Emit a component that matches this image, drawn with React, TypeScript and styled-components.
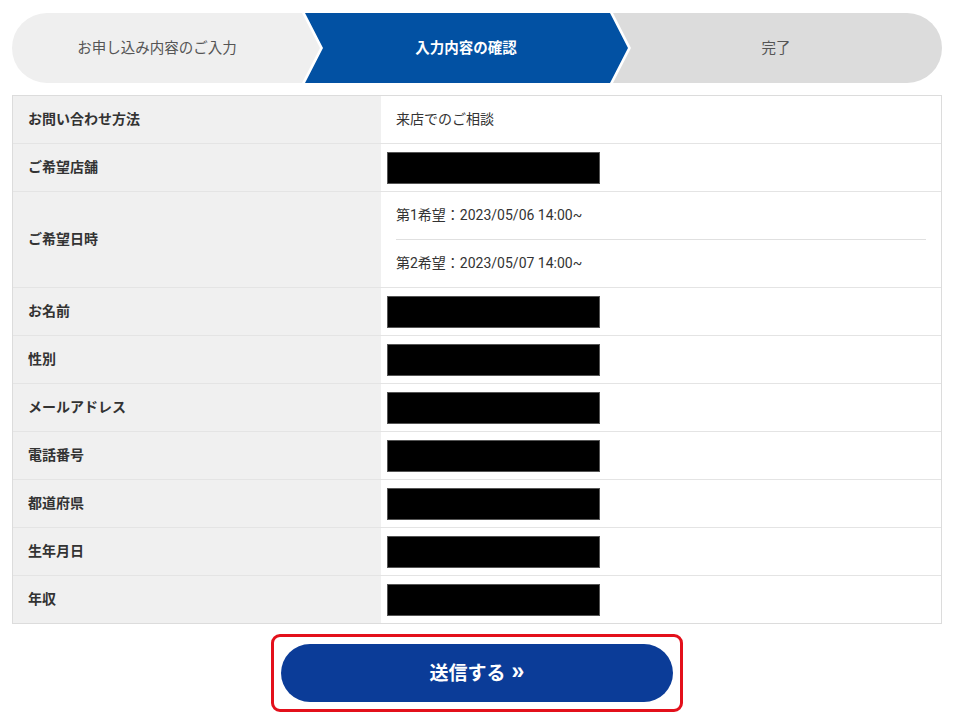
import React from 'react'
import styled, { createGlobalStyle } from 'styled-components'

const GlobalStyle = createGlobalStyle`
  html, body { margin: 0; padding: 0; background: #fff; }
  body {
    font-family: Roboto, "Noto Sans CJK JP", sans-serif;
    color: #333;
  }
`

const Page = styled.div`
  width: 930px;
  padding: 13px 0 0 12px;
`

const Stepper = styled.div`
  display: flex;
  height: 70px;
  border-radius: 35px;
  overflow: hidden;
  background: #fff;
`

type StepKind = 'first' | 'middle' | 'last'

const clips: Record<StepKind, string> = {
  first: 'polygon(0 0, 290px 0, 308px 50%, 290px 100%, 0 100%)',
  middle: 'polygon(3px 0, 308px 0, 326px 50%, 308px 100%, 3px 100%, 21px 50%)',
  last: 'polygon(3px 0, 100% 0, 100% 100%, 3px 100%, 21px 50%)',
}

const Step = styled.div<{ $kind: StepKind; $active?: boolean }>`
  display: flex;
  align-items: center;
  justify-content: center;
  flex: ${p => (p.$kind === 'last' ? '1' : 'none')};
  width: ${p => (p.$kind === 'first' ? '310px' : p.$kind === 'middle' ? '328px' : 'auto')};
  margin-left: ${p => (p.$kind === 'first' ? '0' : '-20px')};
  padding: ${p => (p.$kind === 'first' ? '0 20px 3px 0' : p.$kind === 'middle' ? '0 20px 3px' : '0 0 3px')};
  box-sizing: border-box;
  clip-path: ${p => clips[p.$kind]};
  background: ${p => (p.$active ? '#0251a3' : p.$kind === 'first' ? '#efefef' : '#dcdcdc')};
  color: ${p => (p.$active ? '#fff' : '#555')};
  font-size: 14.5px;
  font-weight: ${p => (p.$active ? 700 : 400)};
`

const Table = styled.div`
  margin-top: 12px;
  border: 1px solid #dcdcdc;
`

const Row = styled.div<{ $tall?: boolean }>`
  display: grid;
  grid-template-columns: 368px 1fr;
  box-sizing: border-box;
  height: ${p => (p.$tall ? '96px' : '48px')};
  border-top: 1px solid #e4e4e4;
  &:first-child { border-top: none; height: 47px; }
`

const Label = styled.div`
  display: flex;
  align-items: center;
  padding: 0 0 4px 15px;
  background: #f0f0f0;
  font-size: 14px;
  font-weight: 700;
  color: #333;
`

const Value = styled.div`
  display: flex;
  flex-direction: column;
  justify-content: center;
  padding: 0 15px;
  font-size: 14px;
  color: #333;
`

const Plain = styled.div`
  padding-bottom: 4px;
`

const SubLine = styled.div`
  display: flex;
  align-items: center;
  flex: 1;
  padding-bottom: 4px;
  & + & { border-top: 1px solid #e0e0e0; }
`

const Redacted = styled.div`
  width: 211px;
  height: 30px;
  margin-left: -9px;
  background: #000;
  border: 1px solid #555;
`

const ButtonArea = styled.div`
  display: flex;
  justify-content: center;
  margin-top: 10px;
`

const Frame = styled.div`
  padding: 7px;
  border: 3px solid #e3101b;
  border-radius: 9px;
`

const SubmitButton = styled.button`
  display: flex;
  align-items: center;
  justify-content: center;
  gap: 6px;
  width: 392px;
  height: 58px;
  padding: 0 0 4px;
  border: none;
  border-radius: 29px;
  background: #0b3c98;
  color: #fff;
  font-family: Roboto, "Noto Sans CJK JP", sans-serif;
  font-size: 19px;
  font-weight: 700;
  cursor: pointer;
`

const Chevrons = styled.span`
  font-family: "Liberation Sans", sans-serif;
  font-size: 23px;
  font-weight: 700;
`

const rows: { label: string; value?: string }[] = [
  { label: 'お問い合わせ方法', value: '来店でのご相談' },
  { label: 'ご希望店舗' },
  { label: 'ご希望日時' },
  { label: 'お名前' },
  { label: '性別' },
  { label: 'メールアドレス' },
  { label: '電話番号' },
  { label: '都道府県' },
  { label: '生年月日' },
  { label: '年収' },
]

export default function App() {
  return (
    <>
      <GlobalStyle />
      <Page>
        <Stepper>
          <Step $kind="first">お申し込み内容のご入力</Step>
          <Step $kind="middle" $active>入力内容の確認</Step>
          <Step $kind="last">完了</Step>
        </Stepper>
        <Table>
          {rows.map(r =>
            r.label === 'ご希望日時' ? (
              <Row key={r.label} $tall>
                <Label>{r.label}</Label>
                <Value>
                  <SubLine>第1希望：2023/05/06 14:00~</SubLine>
                  <SubLine>第2希望：2023/05/07 14:00~</SubLine>
                </Value>
              </Row>
            ) : (
              <Row key={r.label}>
                <Label>{r.label}</Label>
                <Value>{r.value ? <Plain>{r.value}</Plain> : <Redacted />}</Value>
              </Row>
            )
          )}
        </Table>
        <ButtonArea>
          <Frame>
            <SubmitButton>
              送信する<Chevrons>»</Chevrons>
            </SubmitButton>
          </Frame>
        </ButtonArea>
      </Page>
    </>
  )
}
